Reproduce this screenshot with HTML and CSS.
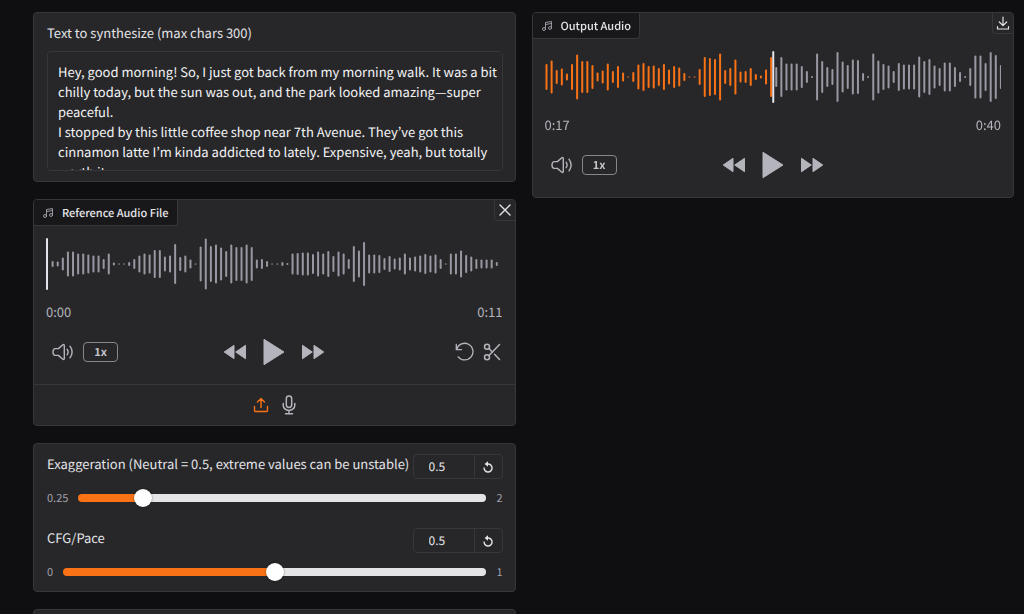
FILE: index.html
```html
<!DOCTYPE html>
<html lang="en">
<head>
<meta charset="utf-8">
<title>Speech synthesis</title>
<link rel="stylesheet" href="styles.css">
</head>
<body>
<svg class="sprite" aria-hidden="true">
  <symbol id="music" viewBox="0 0 24 24"><g fill="none" stroke="currentColor" stroke-width="1.8" stroke-linecap="round" stroke-linejoin="round"><path d="M9 18V5l12-2v13M9 9l12-2"/><circle cx="6" cy="18" r="3"/><circle cx="18" cy="16" r="3"/></g></symbol>
  <symbol id="volume" viewBox="0 0 22 18"><g fill="none" stroke="currentColor" stroke-width="1.4" stroke-linecap="round" stroke-linejoin="round"><path d="M12.3 2.4v13.2c0 .8-.8 1.1-1.4.6L6.4 12.4H3.2C1.9 12.4 1 10.9 1 9s.9-3.4 2.2-3.4h3.2l4.5-3.8c.6-.5 1.4-.2 1.4.6zM15.2 6.300q1.8 2.7 0 5.4M18 3.200q4.2 5.800 0 11.600"/></g></symbol>
  <symbol id="rewind" viewBox="0 0 24 16"><g fill="currentColor" stroke="currentColor" stroke-linejoin="round"><path d="M11 1.300v13.400L1.200 8zM22.500 1.300v13.400L12.700 8z"/></g></symbol>
  <symbol id="forward" viewBox="0 0 24 16"><g fill="currentColor" stroke="currentColor" stroke-linejoin="round"><path d="M1.500 1.300v13.400L11.300 8zM13 1.300v13.400L22.800 8z"/></g></symbol>
  <symbol id="play" viewBox="0 0 22 28"><path fill="currentColor" stroke="currentColor" stroke-linejoin="round" d="M1 1.300v25.400L21 14z"/></symbol>
  <symbol id="undo" viewBox="0 0 20 20"><g fill="none" stroke="currentColor" stroke-width="1.300" stroke-linecap="round" stroke-linejoin="round"><path d="M1.300 2.500v5.200h5.200M1.700 7.300A8.300 8.300 0 1 1 3.200 14.800"/></g></symbol>
  <symbol id="scissors" viewBox="0 0 18 18"><g fill="none" stroke="currentColor" stroke-width="1.500" stroke-linecap="round"><circle cx="4" cy="3.800" r="2.500"/><circle cx="4" cy="14.200" r="2.500"/><path d="M6 12.500L16.500 1.500M6 5.500l3.500 3.700M11.500 11.200l5 5.200"/></g></symbol>
  <symbol id="upload" viewBox="0 0 16 16"><g fill="none" stroke="currentColor" stroke-width="1.400" stroke-linecap="round" stroke-linejoin="round"><path d="M1.500 9.500v4q0 1 1 1h11q1 0 1-1v-4M8 10.500v-9M4.500 5L8 1.500 11.500 5"/></g></symbol>
  <symbol id="mic" viewBox="0 0 14 20"><g fill="none" stroke="currentColor" stroke-width="1.500" stroke-linecap="round"><rect x="4.300" y="1" width="5.400" height="11.500" rx="2.700"/><path d="M1.200 8.500v1.700a5.800 5.200 0 0 0 11.600 0V8.500M7 15.500v3M3.500 18.700h7"/></g></symbol>
  <symbol id="download" viewBox="0 0 14 14"><path fill="none" stroke="currentColor" stroke-width="1.200" stroke-linecap="round" stroke-linejoin="round" d="M7 1v8.500M3.300 6L7 9.700 10.700 6M1.500 10.500v2.500h11v-2.500"/></symbol>
  <symbol id="close" viewBox="0 0 12 12"><path fill="none" stroke="currentColor" stroke-width="1.400" stroke-linecap="round" d="M1 1l10 10M11 1L1 11"/></symbol>
  <symbol id="reset" viewBox="0 0 12 12"><path fill="none" stroke="currentColor" stroke-width="1.400" d="M5.200 3h1.300a4 4 0 1 1-4.400 3.500"/><path fill="currentColor" d="M6 .3v5.400L2.600 3z"/></symbol>
</svg>
<main class="page">
  <div class="column">
    <section class="panel text-panel">
      <label class="label" for="text">Text to synthesize (max chars 300)</label>
      <textarea class="text-box" id="text" spellcheck="false">Hey, good morning! So, I just got back from my morning walk. It was a bit chilly today, but the sun was out, and the park looked amazing—super peaceful.
I stopped by this little coffee shop near 7th Avenue. They’ve got this cinnamon latte I’m kinda addicted to lately. Expensive, yeah, but totally worth it.</textarea>
    </section>

    <section class="panel">
      <header class="panel-head">
        <h2 class="tab"><svg class="icon-music"><use href="#music"/></svg>Reference Audio File</h2>
        <button class="corner" aria-label="Clear"><svg class="icon-close"><use href="#close"/></svg></button>
      </header>
      <div class="player">
        <svg class="wave" id="reference-wave" viewBox="0 0 456 52" preserveAspectRatio="none"></svg>
        <div class="times"><span>0:00</span><span>0:11</span></div>
        <div class="controls">
          <div class="group sound">
            <button class="plain" aria-label="Volume"><svg class="icon-volume"><use href="#volume"/></svg></button>
            <button class="speed">1x</button>
          </div>
          <div class="group transport">
            <button class="plain" aria-label="Skip back"><svg class="icon-skip"><use href="#rewind"/></svg></button>
            <button class="plain" aria-label="Play"><svg class="icon-play"><use href="#play"/></svg></button>
            <button class="plain" aria-label="Skip forward"><svg class="icon-skip"><use href="#forward"/></svg></button>
          </div>
          <div class="group edit">
            <button class="plain" aria-label="Undo"><svg class="icon-undo"><use href="#undo"/></svg></button>
            <button class="plain" aria-label="Trim"><svg class="icon-cut"><use href="#scissors"/></svg></button>
          </div>
        </div>
      </div>
      <footer class="sources">
        <button class="plain active" aria-label="Upload file"><svg class="icon-upload"><use href="#upload"/></svg></button>
        <button class="plain" aria-label="Record"><svg class="icon-mic"><use href="#mic"/></svg></button>
      </footer>
    </section>

    <section class="panel sliders">
      <div class="slider">
        <div class="slider-head">
          <label class="label" for="exaggeration">Exaggeration (Neutral = 0.5, extreme values can be unstable)</label>
          <div class="value"><input class="number" type="text" inputmode="decimal" value="0.5" aria-label="Exaggeration value"><button class="reset" aria-label="Reset exaggeration"><svg class="icon-reset"><use href="#reset"/></svg></button></div>
        </div>
        <div class="range-row"><span>0.25</span><input class="range" id="exaggeration" type="range" min="0.25" max="2" step="0.05" value="0.5" style="--fill: 15.8%"><span>2</span></div>
      </div>
      <div class="slider">
        <div class="slider-head">
          <label class="label" for="pace">CFG/Pace</label>
          <div class="value"><input class="number" type="text" inputmode="decimal" value="0.5" aria-label="CFG/Pace value"><button class="reset" aria-label="Reset pace"><svg class="icon-reset"><use href="#reset"/></svg></button></div>
        </div>
        <div class="range-row"><span>0</span><input class="range" id="pace" type="range" min="0" max="1" step="0.05" value="0.5" style="--fill: 50%"><span>1</span></div>
      </div>
    </section>

    <section class="panel more"></section>
  </div>

  <div class="column">
    <section class="panel">
      <header class="panel-head">
        <h2 class="tab"><svg class="icon-music"><use href="#music"/></svg>Output Audio</h2>
        <button class="corner" aria-label="Download"><svg class="icon-download"><use href="#download"/></svg></button>
      </header>
      <div class="player">
        <svg class="wave" id="output-wave" viewBox="0 0 456 52" preserveAspectRatio="none"></svg>
        <div class="times"><span>0:17</span><span>0:40</span></div>
        <div class="controls">
          <div class="group sound">
            <button class="plain" aria-label="Volume"><svg class="icon-volume"><use href="#volume"/></svg></button>
            <button class="speed">1x</button>
          </div>
          <div class="group transport">
            <button class="plain" aria-label="Skip back"><svg class="icon-skip"><use href="#rewind"/></svg></button>
            <button class="plain" aria-label="Play"><svg class="icon-play"><use href="#play"/></svg></button>
            <button class="plain" aria-label="Skip forward"><svg class="icon-skip"><use href="#forward"/></svg></button>
          </div>
        </div>
      </div>
    </section>
  </div>
</main>
<script src="waves.js"></script>
</body>
</html>
```
FILE: styles.css
```css
* { box-sizing: border-box; }

html { scrollbar-width: none; }

body {
  margin: 0;
  height: 100vh;
  overflow: hidden;
  background: #0f0f11;
  color: #e4e4e7;
  font: 13px/20px "Noto Sans CJK KR", "Noto Sans", sans-serif;
  text-rendering: geometricPrecision;
}

button, input, textarea { font: inherit; color: inherit; text-rendering: inherit; }
button { cursor: pointer; }
svg { display: block; }
.sprite { display: none; }

.page {
  display: grid;
  grid-template-columns: 1fr 1fr;
  gap: 16px;
  padding: 12px 10px 0 33px;
}

.column {
  display: flex;
  flex-direction: column;
  gap: 17px;
  min-width: 0;
}

.panel {
  border: 1px solid #37373b;
  border-radius: 4px;
  background: #27272a;
  overflow: hidden;
}

.text-panel { padding: 10px 12px 10px 13px; }
.label { display: block; white-space: nowrap; }

.text-box {
  display: block;
  width: 100%;
  height: 120px;
  margin-top: 8px;
  padding: 10px 4px 10px 10px;
  border: 1px solid #37373b;
  border-radius: 4px;
  background: #27272a;
  color: #f4f4f5;
  resize: none;
  outline: none;
  overflow-y: auto;
  scrollbar-width: none;
}

.panel-head {
  display: flex;
  justify-content: space-between;
  align-items: flex-start;
}

.tab {
  display: flex;
  align-items: center;
  gap: 8px;
  height: 26px;
  margin: 0;
  padding: 0 8px;
  border: solid #37373b;
  border-width: 0 1px 1px 0;
  border-radius: 0 0 4px 0;
  background: #18181b;
  font-size: 11px;
  font-weight: 500;
}

.corner {
  display: grid;
  place-items: center;
  width: 21px;
  height: 21px;
  padding: 0;
  border: solid #37373b;
  border-width: 0 0 1px 1px;
  border-radius: 0 0 0 4px;
  background: #27272a;
}

.player { padding: 12px 12px 15px; }

.wave {
  width: 100%;
  height: 52px;
}
.bar { fill: #9898a2; }
.played { fill: #f97316; }
.cursor { fill: #e4e4ec; }

.times {
  display: flex;
  justify-content: space-between;
  margin-top: 12px;
  color: #b4b4bc;
}

.controls {
  display: grid;
  grid-template-columns: 1fr auto 1fr;
  align-items: center;
  margin-top: 13px;
  height: 34px;
}
.group { display: flex; align-items: center; }
.sound { gap: 9px; padding-left: 6px; }
.transport { gap: 16px; }
.edit { gap: 8px; justify-content: flex-end; padding-right: 2px; }

.plain {
  padding: 0;
  border: 0;
  background: none;
  color: #b4b4bc;
}
.plain.active { color: #f97316; }

.speed {
  width: 35px;
  height: 20px;
  padding: 0;
  border: 1px solid #85858d;
  border-radius: 4px;
  background: none;
  color: #c4c4ca;
  font-size: 11px;
  font-weight: 700;
  line-height: 18px;
}

.sources {
  display: flex;
  justify-content: center;
  align-items: center;
  gap: 13px;
  height: 41px;
  border-top: 1px solid #37373b;
}

.sliders {
  display: grid;
  gap: 20px;
  padding: 10px 12px 9px 13px;
}
.slider-head {
  display: flex;
  justify-content: space-between;
  align-items: flex-start;
}
.value {
  display: flex;
  height: 25px;
  border: 1px solid #37373b;
  border-radius: 4px;
}
.number {
  width: 60px;
  padding: 0 15px;
  border: 0;
  background: none;
  outline: none;
  font-size: 12px;
}
.reset {
  display: grid;
  place-items: center;
  width: 28px;
  padding: 0;
  border: 0;
  border-left: 1px solid #37373b;
  background: none;
}

.range-row {
  display: flex;
  align-items: center;
  gap: 10px;
  height: 20px;
  margin-top: 9px;
  color: #a1a1aa;
  font-size: 11px;
}
.range {
  flex: 1;
  min-width: 0;
  height: 8px;
  margin: 0;
  border-radius: 4px;
  appearance: none;
  background: linear-gradient(to right, #f97316 var(--fill), #e4e4e7 var(--fill));
}
.range::-webkit-slider-thumb {
  appearance: none;
  width: 18px;
  height: 18px;
  border-radius: 50%;
  background: #fff;
  box-shadow: 0 0 2px rgba(0, 0, 0, 0.5);
}

.more { height: 60px; }

.icon-music { width: 12px; height: 12px; color: #a1a1aa; }
.icon-close { width: 12px; height: 12px; }
.icon-download { width: 14px; height: 14px; }
.icon-volume { width: 22px; height: 18px; }
.icon-skip { width: 24px; height: 16px; }
.icon-play { width: 22px; height: 28px; }
.icon-undo { width: 20px; height: 20px; }
.icon-cut { width: 18px; height: 18px; }
.icon-upload { width: 16px; height: 16px; }
.icon-mic { width: 14px; height: 20px; }
.icon-reset { width: 12px; height: 12px; }
```
FILE: waves.js
```js
const reference = [0,6,5,13,25,25,21,21,19,17,17,10,21,3,1,1,4,10,17,21,19,28,28,15,17,40,14,17,9,1,35,51,36,39,33,26,39,34,34,39,34,9,10,6,1,1,4,2,21,22,23,23,20,25,21,26,16,25,21,10,36,27,44,19,19,18,12,16,11,13,21,13,15,17,20,17,19,10,1,21,21,27,18,15,10,9,9,9,4];
const output = [26,33,14,17,7,26,45,32,32,24,9,13,27,12,22,9,1,10,25,28,22,23,18,26,15,22,19,8,1,1,16,40,38,36,47,14,18,35,11,12,18,6,3,15,40,20,40,27,27,27,22,12,2,47,32,20,16,50,31,24,35,34,8,2,47,33,26,23,12,28,25,25,25,41,32,36,23,18,29,29,20,10,2,18,43,43,28,50,44,24];

// Draws one bar per level, then the playback cursor on top.
function drawWave(id, levels, cursor) {
  const svg = document.getElementById(id);
  const addRect = (x, width, height, name) => {
    const rect = document.createElementNS("http://www.w3.org/2000/svg", "rect");
    rect.setAttribute("x", x);
    rect.setAttribute("y", 26 - height / 2);
    rect.setAttribute("width", width);
    rect.setAttribute("height", height);
    rect.setAttribute("rx", Math.min(1, height / 2));
    rect.setAttribute("class", name);
    svg.append(rect);
  };
  levels.forEach((level, i) => {
    const x = i * 5.1 + 0.5;
    addRect(x, 2, level, x < cursor ? "played" : "bar");
  });
  addRect(cursor, 2, 52, "cursor");
}

drawWave("reference-wave", reference, 0);
drawWave("output-wave", output, 227);
```
